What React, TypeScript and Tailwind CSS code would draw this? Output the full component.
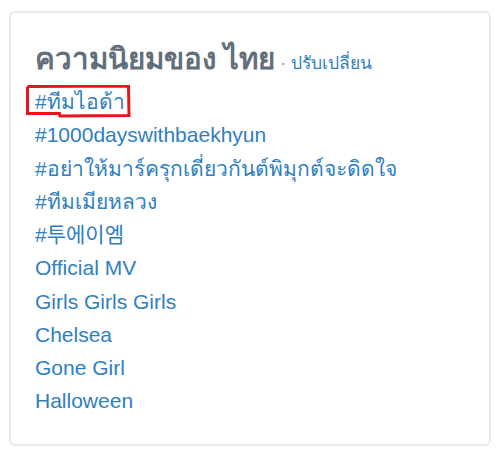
import React from "react";

const items = [
  "#ทีมไอด้า",
  "#1000dayswithbaekhyun",
  "#อย่าให้มาร์ครุกเดี่ยวกันต์พิมุกต์จะดิดใจ",
  "#ทีมเมียหลวง",
  "#투에이엠",
  "Official MV",
  "Girls Girls Girls",
  "Chelsea",
  "Gone Girl",
  "Halloween",
];

export default function App() {
  return (
    <div
      className="w-[500px] h-[455px] bg-white pt-[11px] pl-[9px]"
      style={{ fontFamily: '"Liberation Sans", "Noto Sans CJK KR", sans-serif' }}
    >
      <div className="relative w-[482px] h-[435px] rounded-[6px] border-2 border-[#e6ebef] pl-[24px] pt-[26px]">
        <div className="flex items-baseline h-[40px]">
          <span className="text-[29.5px] leading-[40px] font-bold text-[#626f7b]">ความนิยมของ ไทย</span>
          <span className="ml-[5px] text-[17.5px] text-[#3080c0]">
            <span className="text-[#8899a6]">·</span> ปรับเปลี่ยน
          </span>
        </div>
        <ul className="mt-[6px]">
          {items.map((t) => (
            <li key={t} className="h-[33.25px] leading-[33.25px] text-[21px] text-[#3080c0]">
              {t}
            </li>
          ))}
        </ul>
        <svg className="absolute left-[15px] top-[72px]" width="110" height="35" viewBox="0 0 110 35">
          <polyline
            points="1.5,1.5 102.5,1 103,30.5 34,31 33.5,28.5 1.5,28.5 1.5,1.5"
            fill="none"
            stroke="#e8141b"
            strokeWidth="3"
          />
        </svg>
      </div>
    </div>
  );
}
